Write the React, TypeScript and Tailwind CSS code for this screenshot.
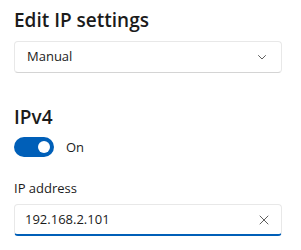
import React, { useState } from 'react';

const ChevronDown = () => (
  <svg width="12" height="12" viewBox="0 0 12 12" fill="none">
    <path d="M2.5 4.5L6 8l3.5-3.5" stroke="#5f5f5f" strokeWidth="1" strokeLinecap="round" strokeLinejoin="round" />
  </svg>
);

const Dismiss = () => (
  <svg width="10" height="10" viewBox="0 0 10 10" fill="none">
    <path d="M1 1l8 8M9 1l-8 8" stroke="#5f5f5f" strokeWidth="1" strokeLinecap="round" />
  </svg>
);

export default function App() {
  const [enabled, setEnabled] = useState(true);
  const [ip, setIp] = useState('192.168.2.101');

  return (
    <div className="w-[301px] h-[250px] bg-white px-[14px] text-[#1b1b1b] font-['Open_Sans','Noto_Sans',sans-serif] overflow-hidden">
      <h1 className="pt-[6px] text-[19px] leading-[28px] font-semibold">Edit IP settings</h1>

      {/* mode dropdown */}
      <button className="mt-[7px] w-[268px] h-[32px] flex items-center justify-between pl-[12px] pr-[13px] rounded-[4px] border border-[#e8e8e8] border-b-[#d4d4d4] bg-white text-[13px] text-[#1b1b1b]">
        <span>Manual</span>
        <ChevronDown />
      </button>

      <h2 className="mt-[30px] text-[19px] leading-[28px] font-semibold">IPv4</h2>

      <div className="mt-[6px] flex items-center gap-[12px]">
        <button
          onClick={() => setEnabled(!enabled)}
          className={
            enabled
              ? 'w-[40px] h-[20px] rounded-full bg-[#005fb8] flex items-center justify-end px-[4px]'
              : 'w-[40px] h-[20px] rounded-full border border-[#8a8a8a] flex items-center justify-start px-[4px]'
          }
        >
          <span className={enabled ? 'w-[12px] h-[12px] rounded-full bg-white' : 'w-[10px] h-[10px] rounded-full bg-[#5c5c5c]'} />
        </button>
        <span className="text-[13px] leading-[20px]">{enabled ? 'On' : 'Off'}</span>
      </div>

      <div className="mt-[21px] text-[13px] leading-[20px]">IP address</div>

      <div className="mt-[6px] w-[268px] h-[32px] flex items-center rounded-[4px] border border-[#e8e8e8] border-b-2 border-b-[#005fb8] bg-white pl-[10px] pr-[12px]">
        <input
          value={ip}
          onChange={e => setIp(e.target.value)}
          className="flex-1 min-w-0 bg-transparent outline-none text-[13px] text-[#1b1b1b] caret-[#1b1b1b]"
        />
        <Dismiss />
      </div>
    </div>
  );
}
